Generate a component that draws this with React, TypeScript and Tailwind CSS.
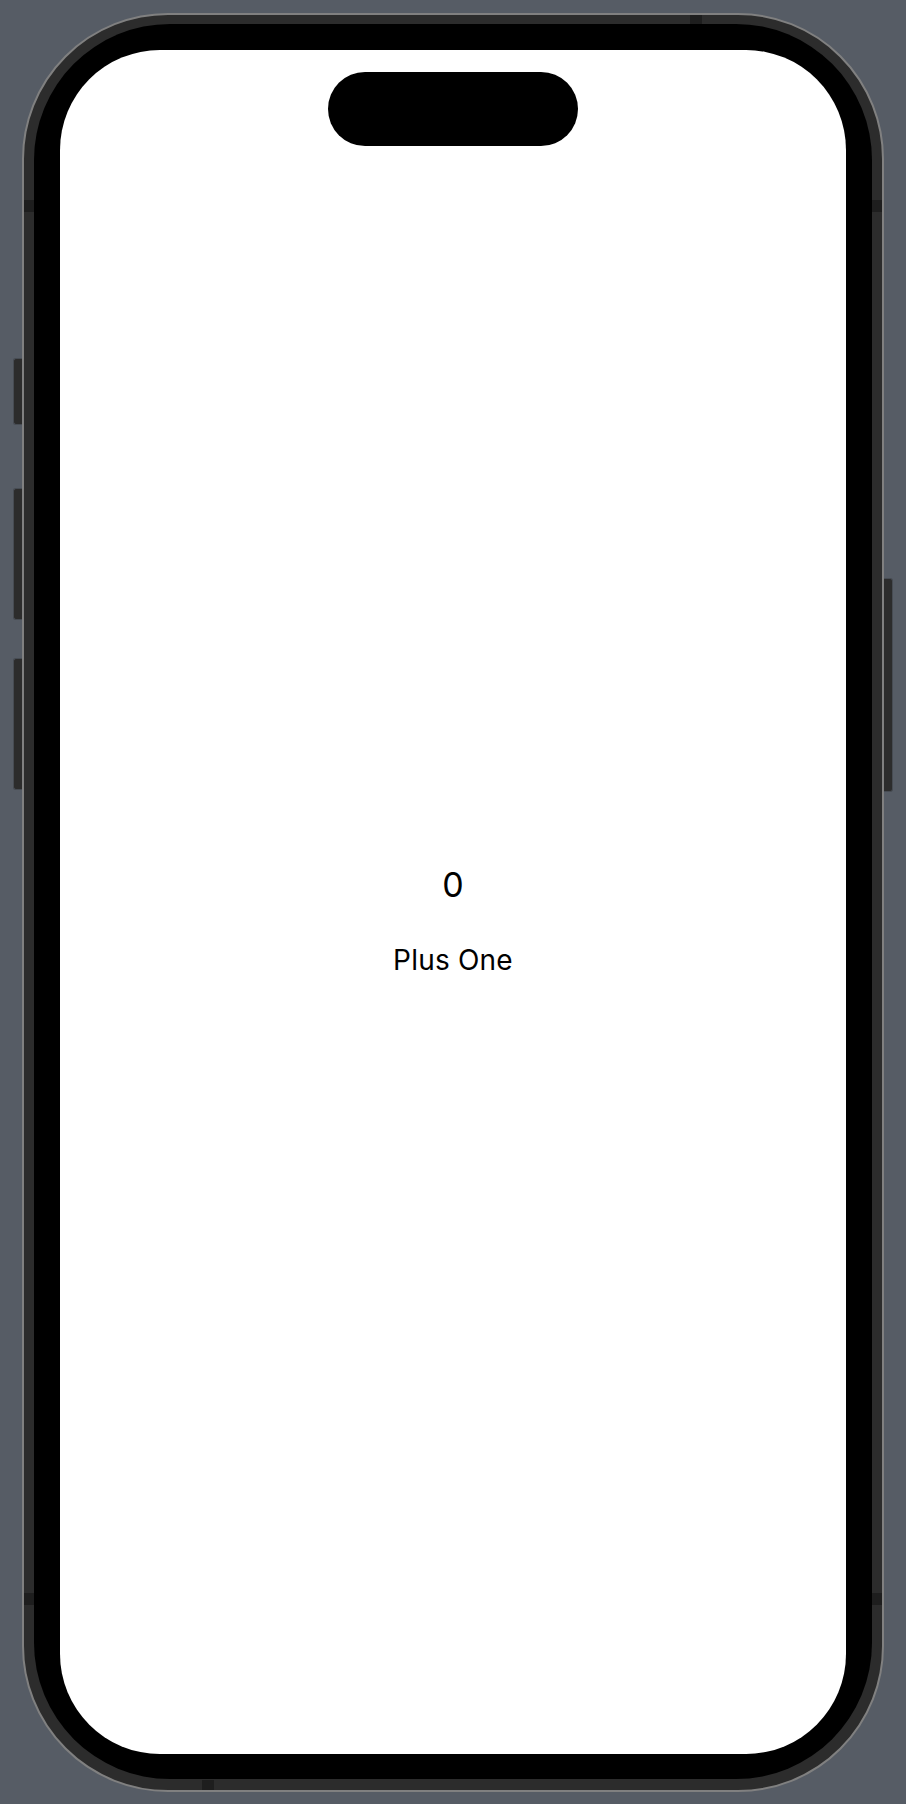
const Band = ({ className }: { className: string }) => (
  <div className={`absolute bg-[#1e1e1e] ${className}`} />
);

const App = () => {
  return (
    <div
      className="flex h-[1804px] w-[906px] items-center justify-center bg-[#565c65]"
      style={{ fontFamily: "Inter, 'Noto Sans', sans-serif" }}
    >
      {/* left buttons */}
      <div className="flex h-[1779px] w-[9px] flex-col pt-[345px]">
        <div className="h-[67px] rounded-l-[3px] border border-r-0 border-[#474c53] bg-[#2c2c2c]" />
        <div className="mt-[63px] h-[132px] rounded-l-[3px] border border-r-0 border-[#474c53] bg-[#2c2c2c]" />
        <div className="mt-[38px] h-[132px] rounded-l-[3px] border border-r-0 border-[#474c53] bg-[#2c2c2c]" />
      </div>

      <div className="relative h-[1779px] w-[862px]">
        <div className="h-full w-full rounded-[146px] border-2 border-[#808080] bg-[#2c2c2c] px-[10px] pt-[9px] pb-[11px]">
          <div className="h-full w-full rounded-[136px] bg-black px-[26px] pt-[26px] pb-[25px]">
            <div className="flex h-full w-full flex-col items-center rounded-[100px] bg-white">
              <div className="mt-[22px] h-[74px] w-[250px] rounded-[37px] bg-black" />

              <div className="mt-[722px] text-[34px] leading-none text-black">0</div>
              <button className="mt-[44px] text-[28px] leading-none tracking-[0.2px] text-black">Plus One</button>
            </div>
          </div>
        </div>

        {/* antenna bands */}
        <Band className="left-[2px] top-[187px] h-[12px] w-[10px]" />
        <Band className="right-[2px] top-[187px] h-[12px] w-[10px]" />
        <Band className="left-[2px] top-[1580px] h-[12px] w-[10px]" />
        <Band className="right-[2px] top-[1580px] h-[12px] w-[10px]" />
        <Band className="left-[668px] top-[2px] h-[9px] w-[12px]" />
        <Band className="left-[180px] bottom-[2px] h-[10px] w-[12px]" />
      </div>

      {/* right button */}
      <div className="flex h-[1779px] w-[9px] flex-col pt-[565px]">
        <div className="h-[214px] rounded-r-[3px] border border-l-0 border-[#474c53] bg-[#2c2c2c]" />
      </div>
    </div>
  );
};

export default App;
